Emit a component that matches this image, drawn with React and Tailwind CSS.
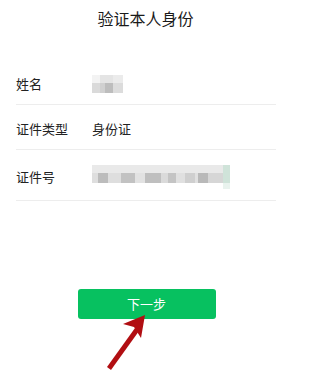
import React from 'react';

const font = { fontFamily: '"Noto Sans CJK SC", "Noto Sans", sans-serif' };

const Row = ({ label, children, className = '' }) => (
    <div className={`flex items-center border-b border-[#ededed] ${className}`}>
        <span className="w-[76px] text-[13px] text-[#222]">{label}</span>
        <div className="flex items-center">{children}</div>
    </div>
);

// pixelated placeholder for the blurred name
const NameBlur = () => (
    <div className="flex flex-col w-[31px] h-[18px]">
        <div className="flex h-[8px]">
            <div className="w-[8px] bg-[#f3f3f3]" />
            <div className="w-[13px] bg-[#e4e4e4]" />
            <div className="w-[10px] bg-[#ebebeb]" />
        </div>
        <div className="flex h-[10px]">
            <div className="w-[8px] bg-[#dadada]" />
            <div className="w-[5px] bg-[#d0d0d0]" />
            <div className="w-[8px] bg-[#bdbdbd]" />
            <div className="w-[10px] bg-[#dcdcdc]" />
        </div>
    </div>
);

const idSegments = [
    ['6px', '#dedede'], ['10px', '#bcbcbc'], ['13px', '#dedede'], ['14px', '#c2c2c2'],
    ['10px', '#e2e2e2'], ['16px', '#bfbfbf'], ['7px', '#dadada'], ['8px', '#c4c4c4'],
    ['9px', '#e0e0e0'], ['10px', '#cfcfcf'], ['3px', '#e0e0e0'], ['10px', '#b9b9b9'],
    ['15px', '#d6d6d6'],
];

const IdBlur = () => (
    <div className="flex">
        <div className="flex flex-col w-[131px]">
            <div className="h-[8px] bg-[#e9e9e9]" />
            <div className="flex h-[10px]">
                {idSegments.map(([w, c], i) => (
                    <div key={i} style={{ width: w, backgroundColor: c }} />
                ))}
            </div>
        </div>
        <div className="flex flex-col w-[7px]">
            <div className="h-[18px] bg-[#cfe3d9]" />
            <div className="h-[6px] bg-[#e9f3ee]" />
        </div>
    </div>
);

export default function App() {
    return (
        <div className="relative w-[291px] h-[377px] bg-white overflow-hidden" style={font}>
            <h1 className="pt-[6px] text-center text-[16px] leading-[24px] text-[#1a1a1a]">验证本人身份</h1>

            <div className="mt-[29px] pl-[16px] pr-[15px]">
                <Row label="姓名" className="h-[46px] pt-[4px]">
                    <NameBlur />
                </Row>
                <Row label="证件类型" className="h-[45px] pt-[4px]">
                    <span className="text-[13px] text-[#222]">身份证</span>
                </Row>
                <Row label="证件号" className="h-[51px] pt-[3px]">
                    <IdBlur />
                </Row>
            </div>

            <div className="mt-[88px] flex justify-center">
                <button className="w-[138px] h-[30px] ml-[2px] rounded-[3px] bg-[#07c160] text-[13px] text-white">
                    下一步
                </button>
            </div>

            {/* red annotation arrow */}
            <svg className="absolute left-0 top-0 pointer-events-none" width="291" height="377">
                <path d="M107 367 L135 328 L139 331 L111 370 Z" fill="#b10e12" />
                <path d="M145 315 L123 324 L134 327 L141 338 Z" fill="#b10e12" />
            </svg>
        </div>
    );
}
